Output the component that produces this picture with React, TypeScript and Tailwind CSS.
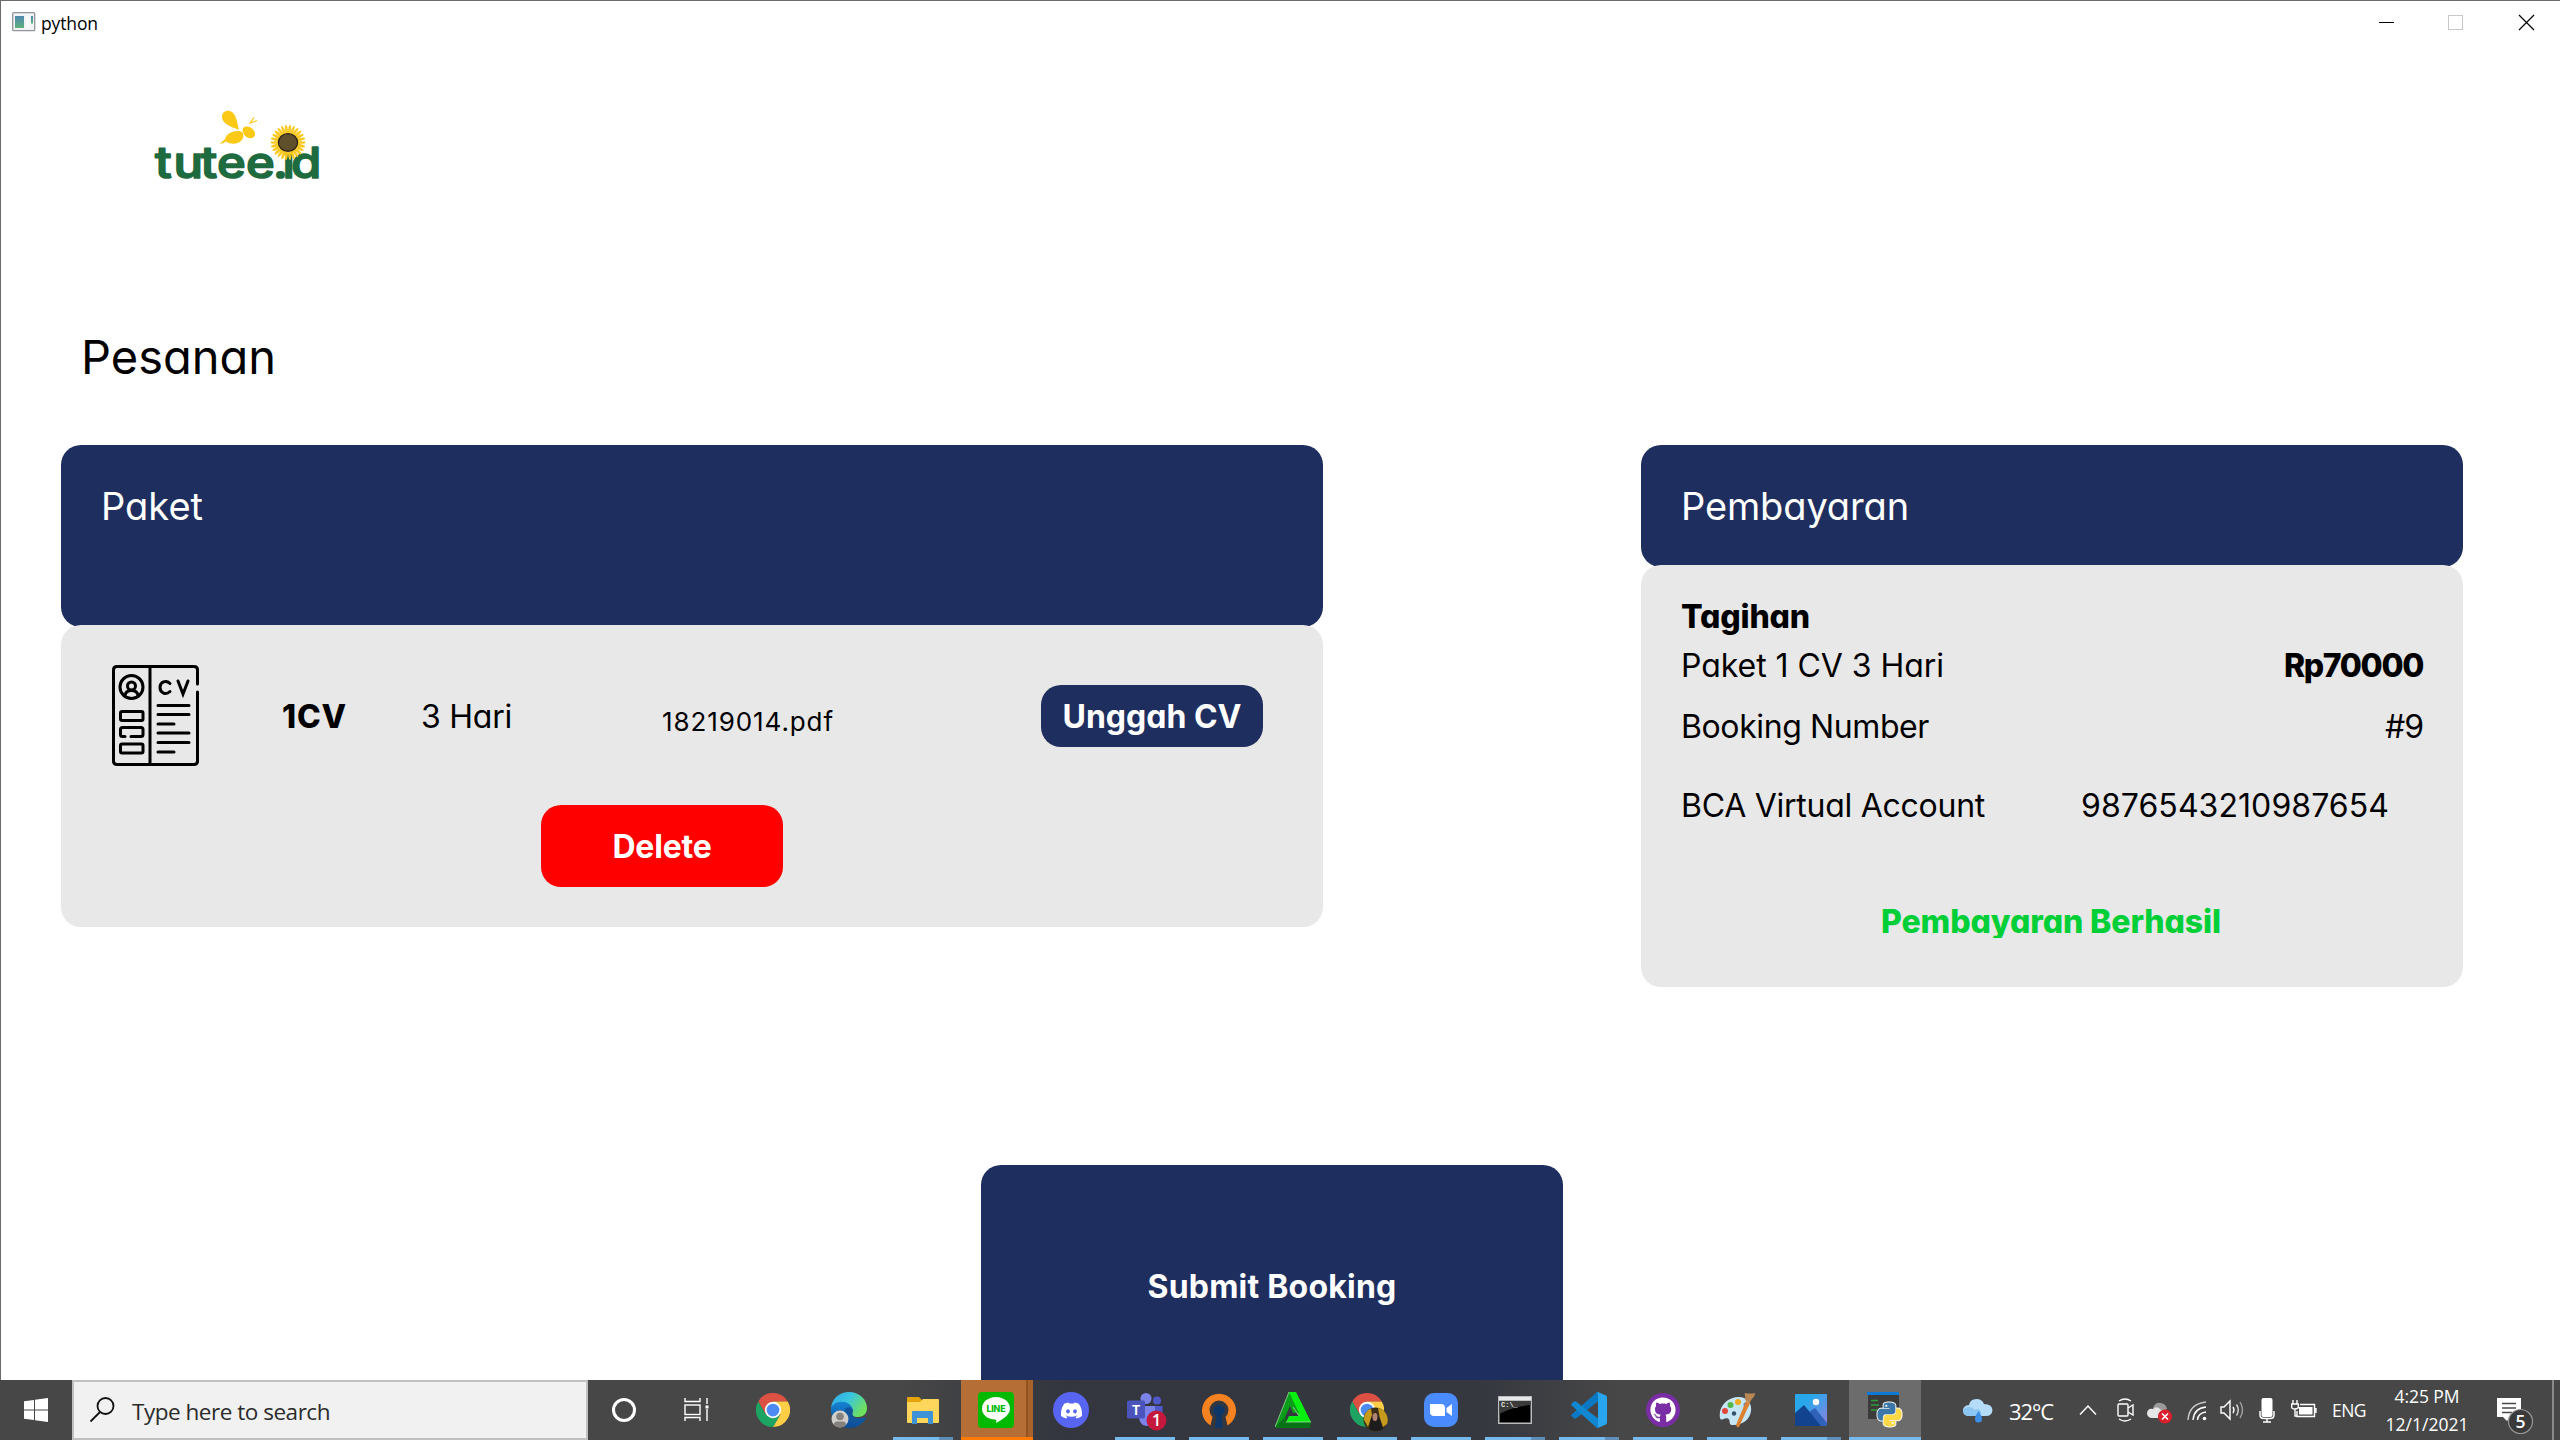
import { useLayoutEffect, useRef, useState, type ReactNode } from "react";
import { FaDiscord, FaGithub } from "react-icons/fa";

/* A line of text whose letter spacing is tuned so that it fills a known width. */
function Fit({ text, width, className = "" }: { text: string; width: number; className?: string }) {
  const ref = useRef<HTMLSpanElement>(null);
  const [spacing, setSpacing] = useState(0);
  useLayoutEffect(() => {
    const el = ref.current;
    if (!el) return;
    el.style.letterSpacing = "0px";
    const natural = el.getBoundingClientRect().width;
    setSpacing((width - natural) / text.length);
  }, [text, width]);
  return (
    <span ref={ref} className={`inline-block whitespace-pre ${className}`} style={{ letterSpacing: `${spacing}px` }}>
      {text}
    </span>
  );
}

const PYTHON_HALF =
  "M14.25.18l.9.2.73.26.59.3.45.32.34.34.25.34.16.33.1.3.04.26.02.2-.01.13V8.5l-.05.63-.13.55-.21.46-.26.38-.3.31-.33.25-.35.19-.35.14-.33.1-.3.07-.26.04-.21.02H8.77l-.69.05-.59.14-.5.22-.41.27-.33.32-.27.35-.2.36-.15.37-.1.35-.07.32-.04.27-.02.21v3.06H3.17l-.21-.03-.28-.07-.32-.12-.35-.18-.36-.26-.36-.36-.35-.46-.32-.59-.28-.73-.21-.88-.14-1.05-.05-1.23.06-1.22.16-1.04.24-.87.32-.71.36-.57.4-.44.42-.33.42-.24.4-.16.36-.1.32-.05.24-.01h.16l.06.01h8.16v-.83H6.18l-.01-2.75-.02-.37.05-.34.11-.31.17-.28.25-.26.31-.23.38-.2.44-.18.51-.15.58-.12.64-.1.71-.06.77-.04.84-.02 1.27.05z";

function Logo() {
  const petals = Array.from({ length: 26 }, (_, i) => i * (360 / 26));
  return (
    <svg width="172" height="76" viewBox="154 108 172 76" className="mt-[62px] ml-[153px] block shrink-0 overflow-visible">
      <g fill="#fcc917">
        <path d="M239 130C232 127 222 124 222 117C222 112 226 110 230 111C236 113 237 121 239 130Z" />
        <ellipse cx="248.800" cy="132.300" rx="7" ry="5" transform="rotate(40 248.800 132.300)" />
        <path d="M219.500 144L225 139C227 133 234 130 241 131.500C244.500 133 244 138 241 141C237 144.500 230 144.500 226 141.500C224 143 222 143.500 219.500 144Z" />
      </g>
      <path d="M249.500 124L254 117.500M250.500 123L257 120.500" stroke="#fcc917" strokeWidth="1.300" fill="none" />
      <text
        transform="translate(154 177.500) scale(1.14 1)"
        x="0.900 17.100 40.800 55.300 80.700 104.400 112.700 120.200"
        y="0"
        fontFamily="Inter, sans-serif"
        fontSize="43"
        fontWeight="450"
        fill="#1f6b40"
        stroke="#1f6b40"
        strokeWidth="1.600"
        strokeLinejoin="round"
      >
        tutee.id
      </text>
      <g transform="translate(288 142.500)">
        <circle r="11.500" fill="#f6d050" />
        {petals.map((a) => (
          <ellipse key={a} cx="13" cy="0" rx="4.600" ry="1.350" fill="#fbc81e" transform={`rotate(${a})`} />
        ))}
        <ellipse rx="9.600" ry="8.800" fill="#5f4f2a" stroke="#22201a" strokeWidth="1.200" />
      </g>
    </svg>
  );
}

function CvIcon() {
  return (
    <svg width="90" height="104" viewBox="0 0 90 104" fill="none" stroke="#000" strokeWidth="3" strokeLinecap="round" className="-translate-x-px">
      <path d="M86.500 20V6Q86.500 2.500 83 2.500H6Q2.500 2.500 2.500 6V97Q2.500 100.500 6 100.500H83Q86.500 100.500 86.500 97V28M39 2.500V100.500" />
      <circle cx="20.500" cy="23" r="11.500" />
      <circle cx="20.500" cy="22" r="4" />
      <path d="M14 31.500C14.500 28 17 26.500 20.500 26.500S26.500 28 27 31.500" />
      <path d="M59 19.500C55 15.500 49 18 49 23.500S55 31.500 59 27.500M67 17L72 30L77 17" />
      <path d="M47 41.500H78M47 50.500H78M47 60H63M47 69H78M47 78.500H78M47 88H63" />
      <rect x="9.500" y="47.500" width="22.500" height="9" rx="1.500" />
      <path d="M14 72.500H11.500Q9.500 72.500 9.500 70.500V65.500Q9.500 63.500 11.500 63.500H30Q32 63.500 32 65.500V70.500Q32 72.500 30 72.500H20" />
      <rect x="9.500" y="80" width="22.500" height="9" rx="1.500" />
    </svg>
  );
}

function Chrome() {
  const arm = "M20.800-12H0L-10.400 6L-20.800-12A24 24 0 0 1 20.800-12Z";
  return (
    <svg width="34" height="34" viewBox="-24 -24 48 48">
      <path d={arm} fill="#dd5144" />
      <path d={arm} fill="#ffcd46" transform="rotate(120)" />
      <path d={arm} fill="#1da462" transform="rotate(240)" />
      <circle r="11.500" fill="#fff" />
      <circle r="9" fill="#4c8bf5" />
    </svg>
  );
}

function ChromeProfile() {
  return (
    <div className="relative h-[34px] w-[34px]">
      <Chrome />
      <svg width="25" height="28" viewBox="0 0 25 28" className="absolute top-[14px] left-[13px]">
        <circle cx="12.500" cy="12.500" r="12" fill="#3a2f16" />
        <path d="M1 13A12 12 0 0 1 8 1.500L9 8L5 20ZM15 1A12 12 0 0 1 24 17L20 20L17 12Z" fill="#c69a1c" />
        <path d="M8 12Q12 2 17 12L20 22Q13 26 6 22Z" fill="#1c1c1c" />
        <ellipse cx="12" cy="10" rx="2.500" ry="4" fill="#b28273" />
      </svg>
    </div>
  );
}

function Edge() {
  return (
    <svg width="36" height="36" viewBox="0 0 36 36">
      <defs>
        <linearGradient id="edgeTop" x1="0" y1="0" x2="1" y2="0.500">
          <stop offset="0" stopColor="#2fa8e4" />
          <stop offset="0.500" stopColor="#39c4e0" />
          <stop offset="1" stopColor="#6fe060" />
        </linearGradient>
        <linearGradient id="edgeLow" x1="0" y1="0" x2="0" y2="1">
          <stop offset="0" stopColor="#1583d4" />
          <stop offset="1" stopColor="#0d4a94" />
        </linearGradient>
      </defs>
      <path d="M0 16C1 6 9 0 18 0C28 0 36 7 36 16C36 22 32 25 27 25C23 25 20.500 23.500 21.500 21C23 18 21 14 16 12C9 9.500 3 12 0 16Z" fill="url(#edgeTop)" />
      <path d="M0 16C3 9 13 8 18 12C22 15 22 18 21 20C20 24 24 28 35 26C31 33 25 36 18 36C8 36-1 28 0 16Z" fill="url(#edgeLow)" />
      <path d="M14 17C17 14 21 15 21.500 19C20 24 24 27 29 26.500C34 26 35 24.500 34.500 27C28 35 10 32 14 17Z" fill="#12559f" />
      <circle cx="9" cy="27" r="8.500" fill="#d0cecb" />
      <circle cx="9" cy="24.500" r="3.800" fill="#85817c" />
      <path d="M3 33C3 29 6 29.500 9 29.500S15 29 15 33Q9 38 3 33Z" fill="#85817c" />
    </svg>
  );
}

function Folder() {
  return (
    <svg width="32" height="27" viewBox="0 0 32 27">
      <path d="M0 1Q0 0 1 0H12L15 3V6H0Z" fill="#e5a50a" />
      <path d="M0 5H13L16 2H31Q32 2 32 3V25Q32 26 31 26H1Q0 26 0 25Z" fill="#ffd65c" />
      <path d="M5 27V15Q5 14 6 14H25Q26 14 26 15V27H21V21H10V27Z" fill="#3d92d8" />
    </svg>
  );
}

function Line() {
  return (
    <svg width="36" height="36" viewBox="0 0 36 36">
      <rect width="36" height="36" rx="4" fill="#00b900" />
      <path d="M18 5C26 5 32 10 32 16.500C32 22 27 26 18 31C18.500 29 18.500 27.500 17 27.500C9 27 4 22.500 4 16.500C4 10 10 5 18 5Z" fill="#fff" />
      <text x="8.500" y="20" fontFamily="Inter, sans-serif" fontSize="8.800" fontWeight="800" fill="#00b900" textLength="19">
        LINE
      </text>
    </svg>
  );
}

function Discord() {
  return (
    <div className="flex h-[36px] w-[36px] items-center justify-center rounded-full bg-[#5865f2] text-white">
      <FaDiscord size={23} />
    </div>
  );
}

function Teams() {
  return (
    <svg width="40" height="38" viewBox="0 0 40 38">
      <circle cx="19" cy="5.500" r="5.500" fill="#7b83eb" />
      <circle cx="30" cy="7.500" r="4" fill="#5059c9" />
      <path d="M25 13H35.500V22Q35 27 30 27L25 25Z" fill="#5059c9" />
      <path d="M12 13H28V24Q27 33 19.500 33Q13 32 12 25Z" fill="#7b83eb" />
      <rect y="7.500" width="18" height="18" rx="1.500" fill="#4b53bc" />
      <text x="9" y="21.500" fontFamily="Inter, sans-serif" fontSize="13" fontWeight="700" fill="#fff" textAnchor="middle">
        T
      </text>
      <circle cx="29.500" cy="27.500" r="10" fill="#c4183c" />
      <text x="29.500" y="33" fontFamily="Open Sans, sans-serif" fontSize="16" fontWeight="600" fill="#fff" textAnchor="middle">
        1
      </text>
    </svg>
  );
}

function OpenVpn() {
  return (
    <svg width="36" height="36" viewBox="0 0 36 36">
      <path d="M9.500 33.500A17 17 0 1 1 26.500 33.500L24.500 25A9.500 9.500 0 1 0 11.500 25Z" fill="#f58220" />
      <circle cx="18" cy="18.500" r="5.800" fill="#0e3767" />
      <path d="M16 21H20L22 36H14Z" fill="#0e3767" />
    </svg>
  );
}

function Triangle() {
  return (
    <svg width="36" height="36" viewBox="0 0 36 36">
      <path d="M14 0H21L36 30H11L14 24H24L14 6Z" fill="#09f010" />
      <path d="M14 0L24 21H18L15 14L7 32L0 35Z" fill="#0b9c1a" />
      <path d="M0 35L11 24V30H36L35 36H1Z" fill="#067317" />
      <path d="M14 0L0 35M11 30H36M18 15L24 24" stroke="#9fd9a0" strokeWidth="0.800" fill="none" />
    </svg>
  );
}

function Zoom() {
  return (
    <svg width="34" height="34" viewBox="0 0 34 34">
      <rect width="34" height="34" rx="10" fill="#4a8cff" />
      <path d="M6 11H17Q21 11 21 15V23H10Q6 23 6 19ZM22.500 15L28 11V23L22.500 19Z" fill="#fff" />
    </svg>
  );
}

function Terminal() {
  return (
    <svg width="34" height="28" viewBox="0 0 34 28">
      <rect width="34" height="28" fill="#b9bbbd" />
      <rect x="1" y="1" width="32" height="3" fill="#e6e8ea" />
      <rect x="1.500" y="5" width="31" height="21.500" fill="#000" />
      <path d="M1.500 5H32.500V9Q16 10 1.500 18Z" fill="#3a3a3a" />
      <text x="3" y="11" fontFamily="Liberation Mono, monospace" fontSize="7" fontWeight="700" fill="#e6e6e6">
        C:\_
      </text>
    </svg>
  );
}

function VsCode() {
  return (
    <svg width="36" height="36" viewBox="0 0 36 36">
      <path d="M27 9.500L5 26.500Q4 27.200 3 26.500L.6 24.300Q-.3 23.400.6 22.500L25.500.4Q26 0 27 0Z" fill="#0a78c2" />
      <path d="M27 26.500L5 9.500Q4 8.800 3 9.500L.6 11.700Q-.3 12.600.6 13.500L25.500 35.600Q26 36 27 36Z" fill="#1287d1" />
      <path d="M25.500.4Q26.500-.3 28 .4L35 3.600Q36 4.200 36 5.500V30.500Q36 31.800 35 32.400L28 35.600Q26.500 36.300 25.500 35.600Q27 36 27 34V2Q27 0 25.500.4Z" fill="#29a4ef" />
    </svg>
  );
}

function GitHubDesktop() {
  return (
    <div className="flex h-[34px] w-[34px] items-center justify-center rounded-full bg-[#7a2da5] text-white">
      <FaGithub size={26} />
    </div>
  );
}

function Paint() {
  return (
    <svg width="36" height="36" viewBox="0 0 36 36">
      <path d="M1 26C-1 15 8 5 20 5C28 5 33 11 32 19C31 28 22 34 13 33C9 32.500 12 28 9 26.500C5 25 2 30 1 26Z" fill="#c6e5f5" />
      <circle cx="6" cy="19" r="3" fill="#e0483a" />
      <circle cx="11.500" cy="13" r="3" fill="#55b948" />
      <circle cx="19" cy="10" r="3" fill="#f0a81c" />
      <circle cx="27" cy="13" r="2.500" fill="#3a78d0" />
      <circle cx="15" cy="21.500" r="2.200" fill="#34506a" />
      <path d="M17 33L27 9L31 11L20 35Q18 36 17 33Z" fill="#dc8130" />
      <path d="M26 8C27 4 25 3 26 1Q31 2 36 1C36 6 32 6 31 11Z" fill="#b98756" />
    </svg>
  );
}

function Photos() {
  return (
    <svg width="32" height="32" viewBox="0 0 32 32">
      <defs>
        <linearGradient id="photoSky" x1="0" y1="0" x2="1" y2="1">
          <stop offset="0.300" stopColor="#28a8ea" />
          <stop offset="1" stopColor="#8f7fe0" />
        </linearGradient>
      </defs>
      <rect width="32" height="32" rx="1" fill="url(#photoSky)" />
      <path d="M14 18L20 14L32 29V32H16Z" fill="#2f62b8" />
      <path d="M0 19L9 11L26 32H0Z" fill="#12438f" />
      <circle cx="21" cy="8" r="3.200" fill="#fff" />
    </svg>
  );
}

function PythonApp() {
  return (
    <svg width="36" height="36" viewBox="0 0 36 36">
      <rect x="1" y="0" width="31" height="27" fill="#3b3b3b" />
      <rect y="0" width="32" height="3" fill="#0a78d4" />
      <path d="M4 8.500H11M4 13H12M4 18H10" stroke="#2f9d3a" strokeWidth="1.300" />
      <g transform="translate(10.500 10.500)">
        <g stroke="#f4f4f4" strokeWidth="2" strokeLinejoin="round">
          <path d={PYTHON_HALF} />
          <path d={PYTHON_HALF} transform="rotate(180 12 12)" />
        </g>
        <path d={PYTHON_HALF} fill="#3c77a9" />
        <path d={PYTHON_HALF} transform="rotate(180 12 12)" fill="#ffd945" />
        <circle cx="8.800" cy="3.300" r="1.100" fill="#fff" />
        <circle cx="15.200" cy="20.700" r="1.100" fill="#fff" />
      </g>
    </svg>
  );
}

type App = { id: string; icon: ReactNode; bar?: "single" | "stack"; state?: "alert" | "active" };

const apps: App[] = [
  { id: "chrome", icon: <Chrome /> },
  { id: "edge", icon: <Edge /> },
  { id: "files", icon: <Folder />, bar: "stack" },
  { id: "line", icon: <Line />, state: "alert" },
  { id: "discord", icon: <Discord /> },
  { id: "teams", icon: <Teams />, bar: "single" },
  { id: "openvpn", icon: <OpenVpn />, bar: "single" },
  { id: "triangle", icon: <Triangle />, bar: "single" },
  { id: "chrome-profile", icon: <ChromeProfile />, bar: "single" },
  { id: "zoom", icon: <Zoom />, bar: "single" },
  { id: "terminal", icon: <Terminal />, bar: "stack" },
  { id: "vscode", icon: <VsCode />, bar: "stack" },
  { id: "github", icon: <GitHubDesktop />, bar: "single" },
  { id: "paint", icon: <Paint />, bar: "single" },
  { id: "photos", icon: <Photos />, bar: "stack" },
  { id: "python", icon: <PythonApp />, state: "active" },
];

function AppSlot({ app }: { app: App }) {
  const bg = app.state === "alert" ? "bg-[#b56e36]" : app.state === "active" ? "bg-[#6c6c6c]" : "";
  return (
    <div className={`relative flex h-[60px] w-[72px] items-center justify-center ${bg}`}>
      <div className={app.id === "chrome" ? "-translate-x-[2px]" : app.id === "teams" ? "translate-x-[2px] translate-y-[2px]" : app.state === "alert" ? "-translate-x-px" : ""}>{app.icon}</div>
      {app.state === "alert" && (
        <>
          <div className="absolute top-0 right-0 h-[60px] w-[7px] border-l-2 border-[#94521f] bg-[#a8622c]" />
          <div className="absolute bottom-0 left-0 h-[3px] w-full bg-[#ff7a00]" />
        </>
      )}
      {app.state === "active" && <div className="absolute bottom-0 left-0 h-[3px] w-full bg-[#76b9ed]" />}
      {app.bar && (
        <div className="absolute bottom-0 left-[6px] flex h-[3px] w-[60px] bg-[#76b9ed]">
          {app.bar === "stack" && <div className="ml-auto w-[14px] bg-[#5f8fb6]" />}
        </div>
      )}
    </div>
  );
}

function Tray() {
  return (
    <div className="ml-[42px] flex h-[60px] items-center text-white">
      <svg width="30" height="26" viewBox="0 0 30 26" className="mt-[2px]">
        <path d="M7 18Q0 18 0 12.500Q0 7.500 6 7Q7 1 13.500 1Q19 1 21 6Q29 6 29.500 12Q29 18 23 18Z" fill="#b5dcf8" />
        <path d="M7 18Q0 18 0 12.500Q1 9 6 9Q10 9 11 12Q16 9 18 14Q18 18 14 18Z" fill="#8cc6f2" />
        <path d="M15.500 13Q12 18 12 21Q12 24.500 15.500 24.500T19 21Q19 18 15.500 13Z" fill="#3c8ee6" />
      </svg>
      <div className="mt-[2px] ml-[16px] w-[70px] text-[22px] leading-[30px]">
        <Fit text="32°C" width={44} />
      </div>
      <svg width="18" height="12" viewBox="0 0 18 12" fill="none" stroke="#fff" strokeWidth="1.500">
        <path d="M1 10.500L9 2L17 10.500" />
      </svg>
      <svg width="18" height="24" viewBox="0 0 18 24" fill="none" stroke="#fff" strokeWidth="1.400" className="ml-[20px]">
        <rect x="1" y="6" width="10" height="12" rx="1" />
        <path d="M11 10L16 7V17L11 14M2 3Q8-1 14 3M2 21Q8 25 14 21" />
      </svg>
      <svg width="26" height="24" viewBox="0 0 26 24" className="mt-[3px] ml-[12px]">
        <path d="M6 8Q8 2 14 3Q19 4 20 9L10 14Z" fill="#9a9a9a" />
        <path d="M4 18Q0 17 0 13Q1 8 6 9Q10 5 14 10L20 11V18Z" fill="#e6e6e6" />
        <circle cx="18" cy="16.500" r="7" fill="#d9202c" />
        <path d="M15 13.500L21 19.500M21 13.500L15 19.500" stroke="#fff" strokeWidth="1.600" />
      </svg>
      <svg width="22" height="22" viewBox="0 0 22 22" fill="none" stroke="#fff" strokeWidth="1.400" className="mt-[2px] ml-[14px]">
        <path d="M1 20Q2 4 19 2" opacity="0.700" />
        <path d="M6 20Q7 8 19 7M10.500 20Q11 13 19 12" />
        <circle cx="17.500" cy="18.500" r="1.800" fill="#fff" stroke="none" />
      </svg>
      <svg width="24" height="22" viewBox="0 0 24 22" fill="none" stroke="#fff" strokeWidth="1.400" className="ml-[11px]">
        <path d="M1 8H4L10 2V20L4 14H1ZM13 8Q15 11 13 14" />
        <path d="M16.500 5.500Q20 11 16.500 16.500" opacity="0.800" />
        <path d="M20 3Q25 11 20 19" opacity="0.500" />
      </svg>
      <svg width="16" height="26" viewBox="0 0 16 26" className="ml-[15px]">
        <rect x="2.500" y="1" width="11" height="19" rx="2" fill="#fff" />
        <path d="M1 14V18Q1 21.500 5 21.500H11Q15 21.500 15 18V14M8 21.500V25M4 25H12" stroke="#fff" strokeWidth="1.500" fill="none" />
      </svg>
      <svg width="26" height="20" viewBox="0 0 26 20" fill="none" stroke="#fff" strokeWidth="1.400" className="ml-[16px]">
        <path d="M2 0V4M6 0V4M.7 4H7.300V7Q7.300 9 4 9Q.7 9 .7 7ZM4 9V16H6" />
        <path d="M9 4.500H23.500V16.500H6V11M25 8V13" />
        <rect x="8" y="7" width="13.500" height="7.500" fill="#fff" stroke="none" />
      </svg>
      <div className="ml-[15px] w-[49px] text-[17.500px] leading-[22px]">
        <Fit text="ENG" width={34} />
      </div>
      <div className="flex w-[92px] flex-col items-center text-[17.500px] leading-[28px]">
        <Fit text="4:25 PM" width={65} />
        <Fit text="12/1/2021" width={83} />
      </div>
      <div className="relative ml-[24px] h-[60px] w-[40px]">
        <svg width="40" height="60" viewBox="0 0 40 60">
          <path d="M0 18H24V37H13L10 41L6 37H0Z" fill="#fff" />
          <path d="M5 23.500H19M5 28H19M5 32.500H15" stroke="#474747" strokeWidth="1.400" />
          <circle cx="23.500" cy="41.500" r="12" fill="#3a3a3a" stroke="#999" strokeWidth="1.200" />
          <text x="23.500" y="47.500" fontFamily="Open Sans, sans-serif" fontSize="17.500" fontWeight="600" fill="#fff" textAnchor="middle">
            5
          </text>
        </svg>
      </div>
    </div>
  );
}

function Taskbar() {
  return (
    <footer className="relative z-10 flex h-[60px] w-full bg-[linear-gradient(90deg,#474747_0px,#474747_900px,#34363f_1060px,#363840_1480px,#474747_1620px,#474747_2560px)] font-['Open_Sans',sans-serif]">
      <div className="flex w-[72px] items-center justify-center">
        <svg width="24" height="24" viewBox="0 0 24 24" fill="#fff">
          <path d="M0 3.300L10 2V11.500H0ZM11 1.800L24 0V11.500H11ZM0 12.500H10V22L0 20.700ZM11 12.500H24V24L11 22.200Z" />
        </svg>
      </div>
      <div className="flex h-[60px] w-[516px] items-center border-2 border-[#c0c0c0] bg-[#f1f1f1]">
        <svg width="26" height="26" viewBox="0 0 26 26" fill="none" stroke="#111" strokeWidth="1.800" className="ml-[15px]">
          <circle cx="16.500" cy="9" r="8" />
          <path d="M11 15L1.500 24.500" />
        </svg>
        <div className="mt-[3px] ml-[17px] text-[22.500px] leading-[30px] text-[#2b2b2b]">
          <Fit text="Type here to search" width={198} />
        </div>
      </div>
      <div className="flex w-[72px] items-center justify-center">
        <div className="h-[24px] w-[24px] rounded-full border-[3px] border-white" />
      </div>
      <div className="flex w-[72px] items-center justify-center">
        <svg width="26" height="26" viewBox="0 0 26 26" fill="none" stroke="#fff" strokeWidth="1.400">
          <path d="M2 1V4.500H17V1M2 24V20.500H17V24M24 1V7M24 12V24" />
          <rect x="2" y="8" width="15" height="9.500" />
          <rect x="22.500" y="8.500" width="3" height="3" fill="#fff" stroke="none" />
        </svg>
      </div>
      <div className="ml-[7px] flex gap-[2px]">
        {apps.map((a) => (
          <AppSlot key={a.id} app={a} />
        ))}
      </div>
      <Tray />
      <div className="ml-auto h-[60px] w-[8px] border-l-2 border-[#8a8a8a]" />
    </footer>
  );
}

function TitleBar() {
  return (
    <header className="flex h-[45px] shrink-0 items-start font-['Open_Sans',sans-serif]">
      <svg width="24" height="20" viewBox="0 0 24 20" className="mt-[11px] ml-[11px]">
        <defs>
          <linearGradient id="winIcon" x1="0" y1="0" x2="0" y2="1">
            <stop offset="0" stopColor="#4f86b0" />
            <stop offset="1" stopColor="#5cb27a" />
          </linearGradient>
        </defs>
        <rect x="0.700" y="0.700" width="22" height="18" rx="1" fill="#f1f3f4" stroke="#8f959b" strokeWidth="1.300" />
        <rect x="3" y="4" width="9" height="12" fill="url(#winIcon)" />
        <rect x="19" y="4" width="2" height="7.500" fill="url(#winIcon)" />
        <path d="M14 4H17.500V16H14Z" fill="#fafafa" />
      </svg>
      <div className="mt-[10px] ml-[5px] text-[17.500px] leading-[24px] text-black">
        <Fit text="python" width={57} />
      </div>
      <svg width="156" height="17" viewBox="0 0 156 17" fill="none" className="mt-[13px] mr-[25px] ml-auto">
        <path d="M0 8.500H15" stroke="#000" />
        <rect x="69.500" y="1.500" width="14" height="14" stroke="#c8c8c8" />
        <path d="M140 1L155 16M155 1L140 16" stroke="#000" strokeWidth="1.200" />
      </svg>
    </header>
  );
}

function Row({ left, leftW, right, rightW, rightClass = "" }: { left: string; leftW: number; right: string; rightW: number; rightClass?: string }) {
  return (
    <div className="flex justify-between">
      <Fit text={left} width={leftW} />
      <Fit text={right} width={rightW} className={rightClass} />
    </div>
  );
}

function PackageCard() {
  return (
    <section className="w-[1262px]">
      <div className="h-[182px] rounded-[20px] bg-[#1e2e5e] pt-[37px] pl-[40px] text-[38px] leading-[48px] text-white">
        <Fit text="Paket" width={102} />
      </div>
      <div className="-mt-[2px] h-[302px] rounded-[20px] bg-[#e8e8e8] pt-[39px] pl-[51px]">
        <div className="grid h-[104px] grid-cols-[170px_139px_240px_380px_222px] items-center text-[32px] leading-[40px]">
          <CvIcon />
          <Fit text="1CV" width={65} className="mt-px justify-self-start font-extrabold" />
          <Fit text="3 Hari" width={91} className="mt-px justify-self-start font-[370]" />
          <Fit text="18219014.pdf" width={172} className="mt-[11px] ml-px justify-self-start text-[26px]" />
          <button className="flex h-[62px] items-center justify-center rounded-[20px] bg-[#1e2e5e] font-bold text-white">
            <Fit text="Unggah CV" width={179} className="mt-px" />
          </button>
        </div>
        <button className="mt-[37px] ml-[429px] flex h-[82px] w-[242px] items-center justify-center rounded-[20px] bg-[#ff0000] text-[32px] leading-[40px] font-bold text-white">
          <Fit text="Delete" width={99} className="mt-px" />
        </button>
      </div>
    </section>
  );
}

function PaymentCard() {
  return (
    <section className="w-[822px]">
      <div className="h-[122px] rounded-[20px] bg-[#1e2e5e] pt-[37px] pl-[40px] text-[38px] leading-[48px] text-white">
        <Fit text="Pembayaran" width={228} />
      </div>
      <div className="-mt-[2px] flex h-[422px] flex-col rounded-[20px] bg-[#e8e8e8] pt-[32px] pr-[40px] pl-[40px] text-[32px] leading-[40px] font-[370]">
        <div className="font-extrabold">
          <Fit text="Tagihan" width={129} />
        </div>
        <div className="mt-[9px]">
          <Row left="Paket 1 CV 3 Hari" leftW={263} right="Rp70000" rightW={139} rightClass="font-extrabold" />
        </div>
        <div className="mt-[21px]">
          <Row left="Booking Number" leftW={248} right="#9" rightW={38} />
        </div>
        <div className="mt-[39px] pr-[34px]">
          <Row left="BCA Virtual Account" leftW={304} right="9876543210987654" rightW={308} />
        </div>
        <div className="mt-[76px] h-[36px] overflow-hidden text-center font-extrabold text-[#00cf37]">
          <Fit text="Pembayaran Berhasil" width={340} className="-translate-x-px" />
        </div>
      </div>
    </section>
  );
}

export default function App() {
  return (
    <div className="flex h-[1440px] w-[2560px] flex-col overflow-hidden bg-white">
      <div className="flex h-[1380px] flex-col overflow-hidden border-t border-l border-[#6b6b6b] font-['Inter',sans-serif] text-black [font-feature-settings:'cv11']">
        <TitleBar />
        <Logo />
        <h1 className="mt-[143px] ml-[80px] shrink-0 text-[47px] leading-[60px] font-[430]">
          <Fit text="Pesanan" width={195} />
        </h1>
        <div className="mt-[58px] flex shrink-0 justify-between pr-[97px] pl-[60px]">
          <PackageCard />
          <PaymentCard />
        </div>
        <button className="mt-[178px] ml-[980px] flex h-[243px] w-[582px] shrink-0 items-center justify-center rounded-[20px] bg-[#1e2e5e] text-[32px] leading-[40px] font-bold text-white">
          <Fit text="Submit Booking" width={249} />
        </button>
      </div>
      <Taskbar />
    </div>
  );
}
